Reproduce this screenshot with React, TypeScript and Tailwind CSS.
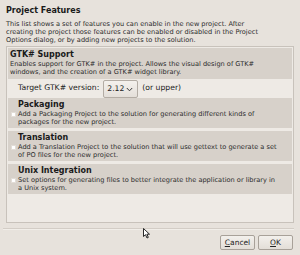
import React from 'react';

type Feature = {
  title: string;
  lines: string[];
};

const features: Feature[] = [
  {
    title: 'Packaging',
    lines: [
      'Add a Packaging Project to the solution for generating different kinds of',
      'packages for the new project.',
    ],
  },
  {
    title: 'Translation',
    lines: [
      'Add a Translation Project to the solution that will use gettext to generate a set',
      'of PO files for the new project.',
    ],
  },
  {
    title: 'Unix Integration',
    lines: [
      'Set options for generating files to better integrate the application or library in',
      'a Unix system.',
    ],
  },
];

const FeatureCard: React.FC<{ feature: Feature }> = ({ feature }) => (
  <div className="flex bg-[#d7d1ca] mt-[3px] pt-[1px] pb-[2px]">
    <div className="w-[10px] shrink-0 pl-[3px] pt-[13px]">
      <div className="w-[5px] h-[5px] bg-white border border-[#e2ddd7]"></div>
    </div>
    <div>
      <div className="text-[8px] font-bold leading-[11px] text-[#1a1a1a]">{feature.title}</div>
      {feature.lines.map((line, i) => (
        <div key={i} className="text-[6.6px] leading-[8px] text-[#2c2c2c] whitespace-nowrap">
          {line}
        </div>
      ))}
    </div>
  </div>
);

const App: React.FC = () => {
  return (
    <div className="relative w-[300px] h-[255px] overflow-hidden bg-[#e7e2dc] font-['DejaVu_Sans',sans-serif] text-[#2c2c2c]">
      <div className="px-[6px] pt-[4.5px]">
        <h1 className="text-[8px] font-bold leading-[12px] text-[#1a1a1a]">Project Features</h1>
        <div className="mt-[3px] text-[6.6px] leading-[8px] whitespace-nowrap">
          <div>This list shows a set of features you can enable in the new project. After</div>
          <div>creating the project those features can be enabled or disabled in the Project</div>
          <div>Options dialog, or by adding new projects to the solution.</div>
        </div>
      </div>

      {/* Features list */}
      <div className="mx-[6px] mt-[2.7px] h-[177px] border border-[#c8c2bb] bg-[#eeeae5] p-[1px]">
        <div className="bg-[#d7d1ca] pl-[2px] pt-[1px] pb-[3px]">
          <div className="text-[8px] font-bold leading-[11px] text-[#1a1a1a]">GTK# Support</div>
          <div className="text-[6.6px] leading-[8px] whitespace-nowrap">
            <div>Enables support for GTK# in the project. Allows the visual design of GTK#</div>
            <div>windows, and the creation of a GTK# widget library.</div>
          </div>
        </div>
        <div className="flex items-center h-[18px] pl-[10px] text-[7.7px] text-[#222] mb-[-2px]">
          <span>Target GTK# version:</span>
          <div className="ml-[4px] flex items-center justify-between w-[35px] h-[18px] mt-[2px] px-[3px] rounded-[2px] border border-[#b3aca4] bg-gradient-to-b from-[#f4f1ed] to-[#e4dfd9]">
            <span>2.12</span>
            <svg width="7" height="5" viewBox="0 0 7 5" className="mr-[1px]">
              <path d="M0.8 1 L3.5 3.8 L6.2 1" fill="none" stroke="#3a3a3a" strokeWidth="1" />
            </svg>
          </div>
          <span className="ml-[4px]">(or upper)</span>
        </div>
        {features.map((f) => (
          <FeatureCard key={f.title} feature={f} />
        ))}
      </div>

      {/* Separator */}
      <div className="ml-[3px] mr-[6px] mt-[5px] h-[2px] border-t border-[#d3cdc6] bg-[#f1eee9]"></div>

      {/* Buttons */}
      <div className="flex justify-end gap-[3px] pr-[7px] mt-[5px]">
        <button className="w-[35px] h-[15px] rounded-[2px] border border-[#a8a199] bg-gradient-to-b from-[#f3f0ec] to-[#e3ded8] text-[7.5px] leading-none text-[#222] font-['DejaVu_Sans',sans-serif]">
          <span className="underline underline-offset-[1px]">C</span>ancel
        </button>
        <button className="w-[35px] h-[15px] rounded-[2px] border border-[#a8a199] bg-gradient-to-b from-[#f3f0ec] to-[#e3ded8] text-[7.5px] leading-none text-[#222] font-['DejaVu_Sans',sans-serif]">
          <span className="underline underline-offset-[1px]">O</span>K
        </button>
      </div>

      {/* Mouse pointer */}
      <svg width="8" height="11" viewBox="0 0 8 11" className="absolute left-[143px] top-[228px]">
        <path d="M0.5 0.5 L0.5 8.5 L2.5 6.7 L4 10 L5.3 9.4 L3.9 6.2 L6.5 6.2 Z" fill="#fff" stroke="#111" strokeWidth="0.9" />
      </svg>
    </div>
  );
};

export default App;
